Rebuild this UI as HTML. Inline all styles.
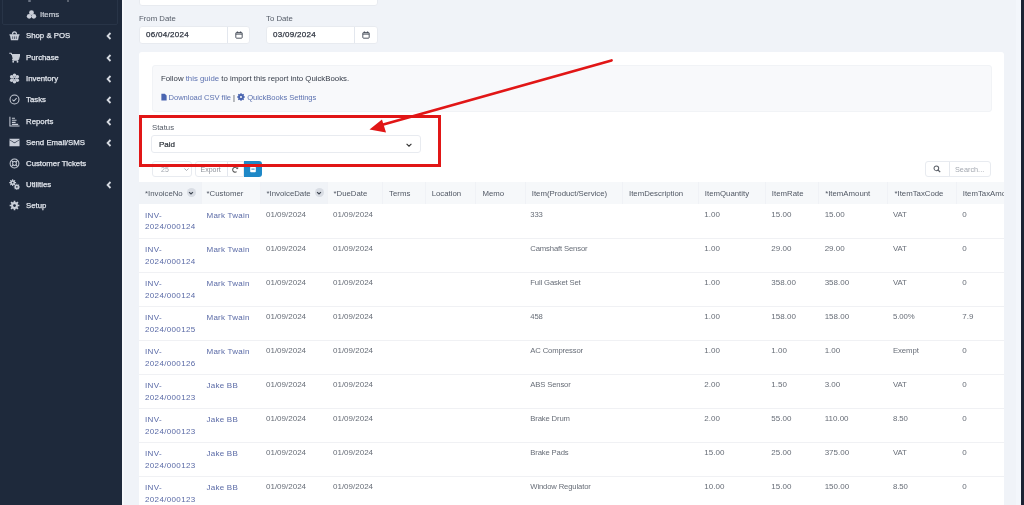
<!DOCTYPE html>
<html><head><meta charset="utf-8">
<style>
*{box-sizing:border-box;margin:0;padding:0}
html,body{width:1024px;height:505px;overflow:hidden}
body{-webkit-font-smoothing:antialiased;background:#f0f3f8;font-family:"Liberation Sans",sans-serif;position:relative;color:#4a5260}
.abs{position:absolute}
#side{left:0;top:0;width:122px;height:505px;background:#1e293b}
#rstrip{left:1021px;top:0;width:3px;height:505px;background:#1b2333}
#hl{left:122px;top:0;width:2px;height:505px;background:#f6f8fb}
.sub{left:2px;top:-12px;width:116px;height:37px;border:1px solid #283447;border-radius:2px}
.mi{position:absolute;left:0;width:122px;height:14px;color:#e2e6ed;font-size:7.8px;-webkit-text-stroke:0.25px #e2e6ed;white-space:nowrap}
.mi .t{position:absolute;left:26px;top:2px}
.mi .ic{position:absolute;left:9px;top:1px;width:11px;height:11px}
.mi .ch{position:absolute;left:106px;top:3px;width:6px;height:8px}
.lbl{font-size:7.8px;color:#555c68}
.inp{background:#fff;border:1px solid #e8ebf0;border-radius:3px}
#card{left:139px;top:52px;width:865px;height:470px;background:#fff;border-radius:3px}
#guide{left:152px;top:65px;width:840px;height:47px;background:#f8f9fb;border-radius:3px;border:1px solid #f1f3f6}
.gt{font-size:7.8px;color:#333a46;white-space:nowrap}
.lnk{color:#5d72b0}
#redbox{left:139px;top:114.5px;width:302px;height:52.5px;border:3px solid #e11616}
table{border-collapse:collapse;table-layout:fixed}
#tbl{left:139px;top:182px;width:865px;overflow:hidden;height:330px}
th{height:22px;background:#f6f8fa;font-weight:normal;text-align:left;font-size:7.8px;color:#515864;padding:0 0 0 6px;white-space:nowrap;overflow:hidden;border-right:1px solid #f0f2f6}
th.s{background:#f0f3f7}
th.c{padding-left:4.5px}
td{height:34px;vertical-align:top;font-size:8px;color:#676d77;padding:4.5px 0 0 6px;line-height:11.5px;border-bottom:1px solid #f0f1f4;white-space:nowrap;overflow:hidden}
td.l{color:#5a6aa6;letter-spacing:0.35px;padding-top:5.5px}
td.it{font-size:7.7px;letter-spacing:-0.15px;padding-left:5px}
td.tc{font-size:7.8px;letter-spacing:-0.1px;padding-left:5px}
td.cu{letter-spacing:0.25px;padding-left:5px}
.sort{display:inline-block;width:9px;height:9px;border-radius:50%;background:#d9dde4;vertical-align:top;position:relative;margin-left:4px;margin-top:-1px;margin-bottom:-3px}
.dv{position:absolute;left:6px;top:3px;font-size:8px;color:#2e3440;letter-spacing:0.3px;-webkit-text-stroke:0.25px #2e3440}
#wrap{position:absolute;left:0;top:0;width:1024px;height:505px;will-change:transform}
</style></head>
<body><div id="wrap">
<div id="side" class="abs"></div>
<div id="rstrip" class="abs"></div><div id="hl" class="abs"></div><div class="abs" style="left:1016px;top:0;width:5px;height:505px;background:#f3f6fb"></div>
<div class="sub abs"></div><div class="abs" style="left:28px;top:0;width:3px;height:1.5px;background:#6b7485;border-radius:1px"></div><div class="abs" style="left:67px;top:0;width:2px;height:1.5px;background:#59616f"></div>

<!-- Items submenu item -->
<div class="mi" style="top:8px">
  <svg class="ic" style="left:26px" viewBox="0 0 12 12"><circle cx="6" cy="4" r="2.6" fill="#c9ced8"/><circle cx="3.5" cy="8" r="2.6" fill="#c9ced8"/><circle cx="8.5" cy="8" r="2.6" fill="#c9ced8"/></svg>
  <span class="t" style="left:40px;color:#cfd4dc;-webkit-text-stroke:0.2px #cfd4dc">Items</span>
</div>

<div class="mi" style="top:29px"><svg class="ic" viewBox="0 0 12 12"><path d="M3.8 4.8C3.8 1.2 8.2 1.2 8.2 4.8" fill="none" stroke="#c9ced8" stroke-width="1.3"/><path d="M0.5 4.5h11v1.6h-0.6l-1 5h-7.8l-1-5h-0.6z" fill="#c9ced8"/><path d="M4 7v2.8M6 7v2.8M8 7v2.8" stroke="#1e293b" stroke-width="0.7"/></svg><span class="t">Shop &amp; POS</span><svg class="ch" viewBox="0 0 6 8"><path d="M4.5 1L1.6 4l2.9 3" fill="none" stroke="#d5d9e0" stroke-width="1.8"/></svg></div>
<div class="mi" style="top:50.5px"><svg class="ic" viewBox="0 0 12 12"><path d="M0.3 1.3h2.1l0.5 1.4h8.8l-1.3 5.2H3.9l0.3 1H10" fill="none" stroke="#c9ced8" stroke-width="1.2" stroke-linejoin="round"/><path d="M2.9 2.7h8.8l-1.3 5.2H4.2z" fill="#c9ced8"/><circle cx="4.6" cy="10.6" r="1" fill="#c9ced8"/><circle cx="9.3" cy="10.6" r="1" fill="#c9ced8"/></svg><span class="t">Purchase</span><svg class="ch" viewBox="0 0 6 8"><path d="M4.5 1L1.6 4l2.9 3" fill="none" stroke="#d5d9e0" stroke-width="1.8"/></svg></div>
<div class="mi" style="top:72px"><svg class="ic" viewBox="0 0 12 12"><g fill="#c9ced8"><circle cx="6" cy="2.4" r="1.9"/><circle cx="6" cy="9.6" r="1.9"/><circle cx="2.9" cy="4.2" r="1.9"/><circle cx="9.1" cy="4.2" r="1.9"/><circle cx="2.9" cy="7.8" r="1.9"/><circle cx="9.1" cy="7.8" r="1.9"/><circle cx="6" cy="6" r="2"/></g><circle cx="6" cy="6" r="0.9" fill="#1e293b"/></svg><span class="t">Inventory</span><svg class="ch" viewBox="0 0 6 8"><path d="M4.5 1L1.6 4l2.9 3" fill="none" stroke="#d5d9e0" stroke-width="1.8"/></svg></div>
<div class="mi" style="top:93px"><svg class="ic" viewBox="0 0 12 12"><circle cx="6" cy="6" r="4.9" fill="none" stroke="#c9ced8" stroke-width="1.1"/><path d="M3.7 6.1l1.6 1.6 3-3.1" fill="none" stroke="#c9ced8" stroke-width="1.1"/></svg><span class="t">Tasks</span><svg class="ch" viewBox="0 0 6 8"><path d="M4.5 1L1.6 4l2.9 3" fill="none" stroke="#d5d9e0" stroke-width="1.8"/></svg></div>
<div class="mi" style="top:114.5px"><svg class="ic" viewBox="0 0 12 12"><path d="M1 0.8v10.2h10.5" fill="none" stroke="#c9ced8" stroke-width="1.1"/><path d="M3.2 2.5h3.3M3.2 4.7h5M3.2 6.9h4M3.2 9.1h6.8" stroke="#c9ced8" stroke-width="1.2"/></svg><span class="t">Reports</span><svg class="ch" viewBox="0 0 6 8"><path d="M4.5 1L1.6 4l2.9 3" fill="none" stroke="#d5d9e0" stroke-width="1.8"/></svg></div>
<div class="mi" style="top:135.5px"><svg class="ic" viewBox="0 0 12 12"><path d="M0.5 3.2L6 6.8l5.5-3.6V10H0.5z" fill="#c9ced8"/><path d="M0.5 2h11v0.6L6 6.1 0.5 2.6z" fill="#c9ced8"/></svg><span class="t">Send Email/SMS</span><svg class="ch" viewBox="0 0 6 8"><path d="M4.5 1L1.6 4l2.9 3" fill="none" stroke="#d5d9e0" stroke-width="1.8"/></svg></div>
<div class="mi" style="top:156.5px"><svg class="ic" viewBox="0 0 12 12"><circle cx="6" cy="6" r="4.8" fill="none" stroke="#c9ced8" stroke-width="1.1"/><circle cx="6" cy="6" r="2.1" fill="none" stroke="#c9ced8" stroke-width="1.1"/><path d="M2.6 2.6l2 2M9.4 2.6l-2 2M2.6 9.4l2-2M9.4 9.4l-2-2" stroke="#c9ced8" stroke-width="1.3"/></svg><span class="t">Customer Tickets</span></div>
<div class="mi" style="top:177.5px"><svg class="ic" viewBox="0 0 12 12"><g fill="#c9ced8"><circle cx="4" cy="4" r="2.6"/><path d="M4 0.3v7.4M0.3 4h7.4M1.4 1.4l5.2 5.2M6.6 1.4l-5.2 5.2" stroke="#c9ced8" stroke-width="1.2"/><circle cx="8.6" cy="8.6" r="2.4"/><path d="M8.6 5.2v6.8M5.2 8.6h6.8M6.2 6.2l4.8 4.8M11 6.2l-4.8 4.8" stroke="#c9ced8" stroke-width="1.1"/></g><circle cx="4" cy="4" r="0.9" fill="#1e293b"/><circle cx="8.6" cy="8.6" r="0.9" fill="#1e293b"/></svg><span class="t">Utilities</span><svg class="ch" viewBox="0 0 6 8"><path d="M4.5 1L1.6 4l2.9 3" fill="none" stroke="#d5d9e0" stroke-width="1.8"/></svg></div>
<div class="mi" style="top:199px"><svg class="ic" viewBox="0 0 12 12"><g fill="#c9ced8"><circle cx="6" cy="6" r="3.7"/><path d="M6 0.7v10.6M0.7 6h10.6M2.25 2.25l7.5 7.5M9.75 2.25l-7.5 7.5" stroke="#c9ced8" stroke-width="1.8"/></g><circle cx="6" cy="6" r="1.5" fill="#1e293b"/></svg><span class="t">Setup</span></div>

<!-- top input -->
<div class="abs inp" style="left:139px;top:-10px;width:239px;height:15.5px"></div>
<div class="abs lbl" style="left:139px;top:13.5px">From Date</div>
<div class="abs lbl" style="left:266px;top:13.5px">To Date</div>

<div id="card" class="abs"></div>
<div id="guide" class="abs"></div>
<div class="abs inp" style="left:139px;top:25.5px;width:111px;height:18px"><span class="dv">06/04/2024</span><div style="position:absolute;left:87px;top:0;width:1px;height:16px;background:#e3e7ee"></div><svg viewBox="0 0 10 10" style="position:absolute;left:95px;top:4px;width:8px;height:8px"><rect x="1" y="1.8" width="8" height="7.2" rx="1" fill="none" stroke="#3c4350" stroke-width="1.1"/><path d="M1 3.8h8" stroke="#3c4350" stroke-width="1.3"/><path d="M3 0.5v1.8M7 0.5v1.8" stroke="#3c4350" stroke-width="1"/></svg></div>
<div class="abs inp" style="left:266px;top:25.5px;width:111.5px;height:18px"><span class="dv">03/09/2024</span><div style="position:absolute;left:87px;top:0;width:1px;height:16px;background:#e3e7ee"></div><svg viewBox="0 0 10 10" style="position:absolute;left:95px;top:4px;width:8px;height:8px"><rect x="1" y="1.8" width="8" height="7.2" rx="1" fill="none" stroke="#3c4350" stroke-width="1.1"/><path d="M1 3.8h8" stroke="#3c4350" stroke-width="1.3"/><path d="M3 0.5v1.8M7 0.5v1.8" stroke="#3c4350" stroke-width="1"/></svg></div>
<div class="abs gt" style="left:161px;top:74px">Follow <span class="lnk">this guide</span> to import this report into QuickBooks.</div>
<div class="abs gt" style="left:160.5px;top:93px;font-size:7.6px;letter-spacing:-0.05px"><svg viewBox="0 0 8 10" style="width:6px;height:8px;vertical-align:-1px"><path d="M0.5 0.5h4.5l2.5 2.5v6.5h-7z" fill="#4a65b0"/></svg> <span class="lnk">Download CSV file</span> | <svg viewBox="0 0 10 10" style="width:8px;height:8px;vertical-align:-1px"><circle cx="5" cy="5" r="3.6" fill="#4a65b0"/><path d="M5 0.3v9.4M0.3 5h9.4M1.7 1.7l6.6 6.6M8.3 1.7l-6.6 6.6" stroke="#4a65b0" stroke-width="1.8"/><circle cx="5" cy="5" r="1.3" fill="#f7f8fa"/></svg> <span class="lnk">QuickBooks Settings</span></div>
<div class="abs lbl" style="left:152px;top:123px">Status</div>
<div class="abs inp" style="left:151px;top:135px;width:270px;height:18px"><span style="position:absolute;left:7px;top:4px;font-size:8px;color:#2a3038;-webkit-text-stroke:0.2px #2a3038">Paid</span><svg viewBox="0 0 10 10" style="position:absolute;left:253px;top:5px;width:8px;height:8px"><path d="M2 3.5l3 3 3-3" fill="none" stroke="#333" stroke-width="1.4"/></svg></div>
<div class="abs inp" style="left:152px;top:161px;width:39.5px;height:16px"><span style="position:absolute;left:8px;top:4px;font-size:7px;color:#a3a8b0">25</span><svg viewBox="0 0 10 10" style="position:absolute;left:30px;top:4px;width:7px;height:7px"><path d="M2 3.5l3 3 3-3" fill="none" stroke="#9aa0a8" stroke-width="1.2"/></svg></div>
<div class="abs inp" style="left:194.5px;top:161px;width:49px;height:16px;border-radius:3px 0 0 3px"><span style="position:absolute;left:5px;top:4px;font-size:7px;color:#8e939b">Export</span><div style="position:absolute;left:31px;top:0;width:1px;height:14px;background:#e3e7ee"></div><svg viewBox="0 0 10 10" style="position:absolute;left:35px;top:3.5px;width:8px;height:8px"><path d="M8 4A3 3 0 1 0 7 7" fill="none" stroke="#555" stroke-width="1.3"/><path d="M6.5 3.5h2.5v-2.5z" fill="#555"/></svg></div>
<div class="abs" style="left:243.5px;top:161px;width:18px;height:16px;background:#1e88c7;border-radius:0 3px 3px 0"><svg viewBox="0 0 10 10" style="position:absolute;left:5px;top:4px;width:8px;height:8px"><rect x="1.5" y="1" width="7" height="8" rx="1" fill="#fff"/><rect x="3" y="4.5" width="4" height="1.2" fill="#1e88c7"/></svg></div>
<div class="abs inp" style="left:925px;top:161px;width:66px;height:15.5px"><div style="position:absolute;left:22.5px;top:0;width:1px;height:13.5px;background:#e6e9ee"></div><svg viewBox="0 0 10 10" style="position:absolute;left:7px;top:3px;width:8px;height:8px"><circle cx="4.2" cy="4.2" r="2.9" fill="none" stroke="#5a5f67" stroke-width="1.3"/><path d="M6.3 6.3L9 9" stroke="#5a5f67" stroke-width="1.5"/></svg><span style="position:absolute;left:29px;top:3px;font-size:7.3px;color:#a3a8b0">Search...</span></div>
<div id="tbl" class="abs"><table style="width:877.3px"><colgroup><col style="width:62.5px"><col style="width:58.5px"><col style="width:67px"><col style="width:55.6px"><col style="width:42.6px"><col style="width:50.8px"><col style="width:49.3px"><col style="width:97.2px"><col style="width:75.9px"><col style="width:67px"><col style="width:53.3px"><col style="width:69.3px"><col style="width:68.3px"><col style="width:60px"></colgroup><tr><th class="s">*InvoiceNo<span class="sort"><svg viewBox="0 0 10 10" style="position:absolute;left:1.5px;top:2px;width:6px;height:6px"><path d="M1.8 3.5l3.2 3.2 3.2-3.2" fill="none" stroke="#3e4652" stroke-width="2"/></svg></span></th><th class="c">*Customer</th><th class="s">*InvoiceDate<span class="sort"><svg viewBox="0 0 10 10" style="position:absolute;left:1.5px;top:2px;width:6px;height:6px"><path d="M1.8 3.5l3.2 3.2 3.2-3.2" fill="none" stroke="#3e4652" stroke-width="2"/></svg></span></th><th class="">*DueDate</th><th class="">Terms</th><th class="">Location</th><th class="">Memo</th><th class="">Item(Product/Service)</th><th class="">ItemDescription</th><th class="">ItemQuantity</th><th class="">ItemRate</th><th class="">*ItemAmount</th><th class="">*ItemTaxCode</th><th class="">ItemTaxAmount</th></tr><tr><td class="l">INV-<br>2024/000124</td><td class="l cu">Mark Twain</td><td>01/09/2024</td><td>01/09/2024</td><td></td><td></td><td></td><td class="it">333</td><td></td><td>1.00</td><td>15.00</td><td>15.00</td><td class="tc">VAT</td><td>0</td></tr><tr><td class="l">INV-<br>2024/000124</td><td class="l cu">Mark Twain</td><td>01/09/2024</td><td>01/09/2024</td><td></td><td></td><td></td><td class="it">Camshaft Sensor</td><td></td><td>1.00</td><td>29.00</td><td>29.00</td><td class="tc">VAT</td><td>0</td></tr><tr><td class="l">INV-<br>2024/000124</td><td class="l cu">Mark Twain</td><td>01/09/2024</td><td>01/09/2024</td><td></td><td></td><td></td><td class="it">Full Gasket Set</td><td></td><td>1.00</td><td>358.00</td><td>358.00</td><td class="tc">VAT</td><td>0</td></tr><tr><td class="l">INV-<br>2024/000125</td><td class="l cu">Mark Twain</td><td>01/09/2024</td><td>01/09/2024</td><td></td><td></td><td></td><td class="it">458</td><td></td><td>1.00</td><td>158.00</td><td>158.00</td><td class="tc">5.00%</td><td>7.9</td></tr><tr><td class="l">INV-<br>2024/000126</td><td class="l cu">Mark Twain</td><td>01/09/2024</td><td>01/09/2024</td><td></td><td></td><td></td><td class="it">AC Compressor</td><td></td><td>1.00</td><td>1.00</td><td>1.00</td><td class="tc">Exempt</td><td>0</td></tr><tr><td class="l">INV-<br>2024/000123</td><td class="l cu">Jake BB</td><td>01/09/2024</td><td>01/09/2024</td><td></td><td></td><td></td><td class="it">ABS Sensor</td><td></td><td>2.00</td><td>1.50</td><td>3.00</td><td class="tc">VAT</td><td>0</td></tr><tr><td class="l">INV-<br>2024/000123</td><td class="l cu">Jake BB</td><td>01/09/2024</td><td>01/09/2024</td><td></td><td></td><td></td><td class="it">Brake Drum</td><td></td><td>2.00</td><td>55.00</td><td>110.00</td><td class="tc">8.50</td><td>0</td></tr><tr><td class="l">INV-<br>2024/000123</td><td class="l cu">Jake BB</td><td>01/09/2024</td><td>01/09/2024</td><td></td><td></td><td></td><td class="it">Brake Pads</td><td></td><td>15.00</td><td>25.00</td><td>375.00</td><td class="tc">VAT</td><td>0</td></tr><tr><td class="l">INV-<br>2024/000123</td><td class="l cu">Jake BB</td><td>01/09/2024</td><td>01/09/2024</td><td></td><td></td><td></td><td class="it">Window Regulator</td><td></td><td>10.00</td><td>15.00</td><td>150.00</td><td class="tc">8.50</td><td>0</td></tr></table></div>
<svg class="abs" style="left:0;top:0;width:1024px;height:505px;pointer-events:none" viewBox="0 0 1024 505"><path d="M611.5 60.5L378 126" stroke="#e11616" stroke-width="2.8" stroke-linecap="round"/><path d="M369.5 129.5L382 119.5L386 132.5z" fill="#e11616"/></svg>
<div id="redbox" class="abs"></div>

</div></body></html>
